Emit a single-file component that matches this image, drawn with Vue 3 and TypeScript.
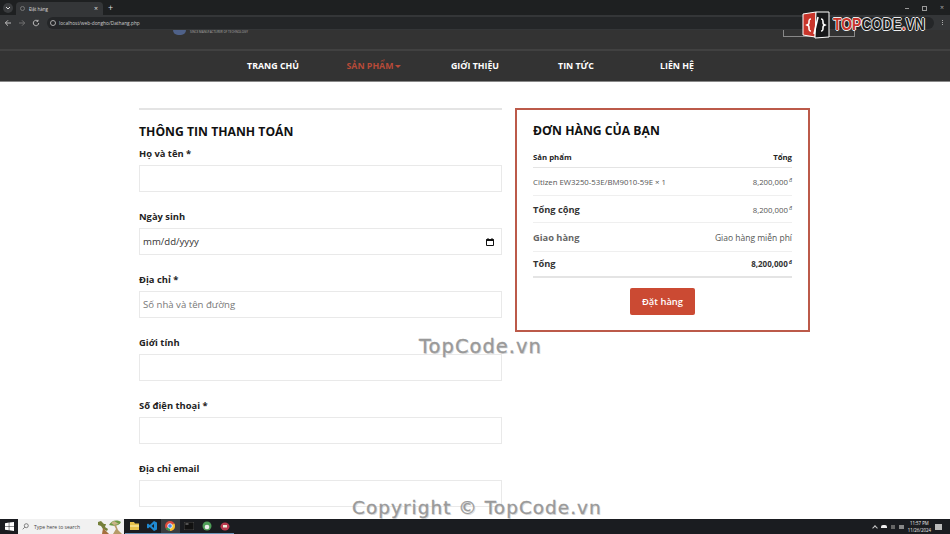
<script setup lang="ts">
const navItems = [
  { label: 'TRANG CHỦ' },
  { label: 'SẢN PHẨM', active: true },
  { label: 'GIỚI THIỆU' },
  { label: 'TIN TỨC' },
  { label: 'LIÊN HỆ' },
];

const fields = [
  { label: 'Họ và tên *', type: 'text', placeholder: '' },
  { label: 'Ngày sinh', type: 'date', placeholder: '' },
  { label: 'Địa chỉ *', type: 'text', placeholder: 'Số nhà và tên đường' },
  { label: 'Giới tính', type: 'text', placeholder: '' },
  { label: 'Số điện thoại *', type: 'text', placeholder: '' },
  { label: 'Địa chỉ email', type: 'text', placeholder: '' },
];
</script>

<template>
  <div class="screen">
    <!-- Browser tabs -->
    <div class="tabstrip">
      <span class="tab-menu">
        <svg width="6" height="6" viewBox="0 0 6 6"><path d="M1 2l2 2 2-2" fill="none" stroke="#ddd" stroke-width="1" /></svg>
      </span>
      <div class="tab">
        <span class="tab-icon"></span>
        <span class="tab-title">Đặt hàng</span>
        <span class="tab-close">×</span>
      </div>
      <span class="tab-new">+</span>
      <div class="window-btns">
        <span class="win-min"></span>
        <span class="win-restore"></span>
        <span class="win-close">×</span>
      </div>
    </div>

    <!-- Address bar -->
    <div class="toolbar">
      <svg width="8" height="8" viewBox="0 0 8 8"><path d="M7 4H1.500M4 1.300L1.300 4 4 6.700" fill="none" stroke="#ccc" stroke-width="0.9" /></svg>
      <svg width="8" height="8" viewBox="0 0 8 8"><path d="M1 4h5.500M4 1.300L6.700 4 4 6.700" fill="none" stroke="#777" stroke-width="0.9" /></svg>
      <svg width="8" height="8" viewBox="0 0 8 8"><path d="M6.700 4A2.700 2.700 0 1 1 5.800 2M6 .8V2.300H4.500" fill="none" stroke="#ccc" stroke-width="0.9" /></svg>
      <div class="address">
        <span class="site-icon"></span>
        <span>localhost/web-dongho/Dathang.php</span>
      </div>
      <span class="kebab"></span>
    </div>

    <div class="page">
      <header class="site-top">
        <div class="site-logo">
          <span class="site-badge"></span>
          <span class="site-tagline">SINCE MANUFACTURER OF TECHNOLOGY</span>
        </div>
        <div class="site-search"></div>
      </header>

      <nav class="nav">
        <a
          v-for="item in navItems"
          :key="item.label"
          class="nav-link"
          :class="{ active: item.active }"
        >
          {{ item.label }}<i v-if="item.active" class="caret"></i>
        </a>
      </nav>

      <main class="content">
        <section class="billing">
          <h2>THÔNG TIN THANH TOÁN</h2>
          <div v-for="field in fields" :key="field.label" class="field">
            <label>{{ field.label }}</label>
            <div class="input">
              <template v-if="field.type === 'date'">
                <span class="date-text">mm/dd/yyyy</span>
                <svg width="10" height="10" viewBox="0 0 10 10">
                  <path d="M1.500 2.500h7v6h-7zM3 1v1.500M7 1v1.500" fill="none" stroke="#111" stroke-width="1" />
                  <rect x="1.500" y="2" width="7" height="2" fill="#111" />
                </svg>
              </template>
              <span v-else class="placeholder">{{ field.placeholder }}</span>
            </div>
          </div>
        </section>

        <aside class="order">
          <h2>ĐƠN HÀNG CỦA BẠN</h2>
          <div class="row row-head">
            <span>Sản phẩm</span>
            <span>Tổng</span>
          </div>
          <div class="row row-item">
            <span>Citizen EW3250-53E/BM9010-59E × 1</span>
            <span>8,200,000<sup>đ</sup></span>
          </div>
          <div class="row row-sub">
            <strong>Tổng cộng</strong>
            <span>8,200,000<sup>đ</sup></span>
          </div>
          <div class="row row-ship">
            <strong>Giao hàng</strong>
            <span>Giao hàng miễn phí</span>
          </div>
          <div class="row row-total">
            <strong>Tổng</strong>
            <b>8,200,000<sup>đ</sup></b>
          </div>
          <button class="order-btn">Đặt hàng</button>
        </aside>
      </main>
    </div>

    <!-- Windows taskbar -->
    <footer class="taskbar">
      <span class="start">
        <svg width="9" height="9" viewBox="0 0 9 9"><path d="M0 1.200l3.800-.6v3.500H0zM4.300.5L9 0v4.100H4.300zM0 4.600h3.800v3.600L0 7.700zM4.300 4.600H9V9l-4.700-.7z" fill="#fff" /></svg>
      </span>
      <div class="search">
        <svg width="7" height="7" viewBox="0 0 7 7"><circle cx="4.300" cy="2.700" r="2" fill="none" stroke="#555" stroke-width="0.7" /><path d="M2.800 4.200L.7 6.300" stroke="#555" stroke-width="0.7" /></svg>
        <span>Type here to search</span>
        <svg class="search-art" width="26" height="15" viewBox="0 0 26 15">
          <path d="M1 3l3-1 3 3 2 0-1 3 3 2-1 2-4-2-2-3-3-1z" fill="#75803a" />
          <path d="M12 6c2-4 7-6 12-3-1 3-6 5-12 3z" fill="#6d9a45" />
          <path d="M14 4l3-2 5 3-5 1z" fill="#c9b48a" />
          <path d="M17 6l2 4-3 5h9l-4-4-2-5z" fill="#b59a67" />
          <path d="M6 9l3 3 3 3H5z" fill="#a4703d" />
        </svg>
      </div>
      <div class="task-icons">
        <span class="task">
          <svg width="9" height="8" viewBox="0 0 9 8"><path d="M0 0h4l1 1.500h4V8H0z" fill="#e8c14a" /><rect y="3" width="9" height="2" fill="#f5dd85" /></svg>
        </span>
        <span class="task">
          <svg width="10" height="10" viewBox="0 0 10 10"><path d="M7 0l3 1.500v7L7 10 2.800 6 1 7.400 0 6.800V3.200L1 2.600 2.800 4zM7 3L4.600 5 7 7z" fill="#1f8ad2" /></svg>
        </span>
        <span class="task task-on">
          <svg width="10" height="10" viewBox="0 0 10 10"><circle cx="5" cy="5" r="5" fill="#dd4b3c" /><path d="M5 5L.8 7.500A5 5 0 0 0 5 10z" fill="#2f9e4f" /><path d="M5 5l4.300-2.500A5 5 0 0 1 5 10z" fill="#f2c230" /><circle cx="5" cy="5" r="2.300" fill="#4a86e8" stroke="#fff" stroke-width="0.8" /></svg>
        </span>
        <span class="task">
          <svg width="10" height="8" viewBox="0 0 10 8"><rect width="10" height="8" fill="#111" stroke="#777" stroke-width="0.5" /><path d="M1.500 2h3" stroke="#ccc" stroke-width="0.7" /></svg>
        </span>
        <span class="task">
          <svg width="10" height="10" viewBox="0 0 10 10"><circle cx="5" cy="5" r="4.500" fill="#4f9e58" /><circle cx="5" cy="6" r="2.300" fill="#eee" /></svg>
        </span>
        <span class="task">
          <svg width="10" height="9" viewBox="0 0 10 9"><ellipse cx="5" cy="4.500" rx="4.500" ry="4" fill="#b93a4e" /><rect x="3" y="3" width="4" height="2.500" fill="#eed" /></svg>
        </span>
      </div>
      <div class="tray">
        <span class="tray-up"></span>
        <span class="tray-cloud"></span>
        <span class="tray-net"></span>
        <span class="tray-vol"></span>
        <div class="clock">
          <span>11:57 PM</span>
          <span>11/26/2024</span>
        </div>
        <span class="notify"></span>
      </div>
    </footer>

    <!-- Overlays burned into the screenshot -->
    <div class="brand">
      <svg width="29" height="28" viewBox="0 0 29 28">
        <path d="M1 3l13-2-1 25-12-2z" fill="#c8352b" stroke="#fff" stroke-width="1" />
        <path d="M14 1h13v25l-14 1z" fill="#17181a" stroke="#fff" stroke-width="1" />
        <path d="M9 8c-2 0-2 1-2 3s0 2-2 3c2 1 2 1 2 3s0 3 2 3" fill="none" stroke="#fff" stroke-width="1.600" />
        <path d="M19 8c2 0 2 1 2 3s0 2 2 3c-2 1-2 1-2 3s0 3-2 3" fill="none" stroke="#fff" stroke-width="1.600" />
        <path d="M16 6l-4 17" stroke="#fff" stroke-width="1.600" />
      </svg>
      <span class="brand-name"><em>TOP</em>CODE<em>.</em>VN</span>
    </div>
    <div class="mark mark-mid">TopCode.vn</div>
    <div class="mark mark-low">Copyright © TopCode.vn</div>
  </div>
</template>

<style>
html,
body {
  margin: 0;
  overflow: hidden;
  background: #fff;
}
</style>

<style scoped>
.screen {
  position: relative;
  display: flex;
  flex-direction: column;
  width: 950px;
  height: 534px;
  overflow: hidden;
  font-family: 'Open Sans', 'Noto Sans', sans-serif;
  color: #111;
}

/* browser */
.tabstrip {
  display: flex;
  align-items: flex-end;
  height: 15px;
  padding-left: 2px;
  background: #1e2021;
  color: #ddd;
}
.tab-menu {
  display: flex;
  align-items: center;
  justify-content: center;
  width: 10px;
  height: 10px;
  margin: 0 3px 2px 1px;
  border-radius: 50%;
  background: #3a3c3e;
}
.tab {
  display: flex;
  align-items: center;
  width: 87px;
  height: 13px;
  padding: 0 5px 0 4px;
  box-sizing: border-box;
  border-radius: 4px 4px 0 0;
  background: #343638;
  font-size: 4.500px;
}
.tab-icon {
  width: 5px;
  height: 5px;
  margin-right: 4px;
  border-radius: 50%;
  border: 1px solid #777;
  box-sizing: border-box;
}
.tab-title {
  flex: 1;
}
.tab-close {
  font-size: 7px;
  line-height: 1;
}
.tab-new {
  margin: 0 0 2px 5px;
  font-size: 9px;
  line-height: 10px;
}
.window-btns {
  display: flex;
  align-items: center;
  gap: 13px;
  margin: 0 6px 4px auto;
  height: 6px;
}
.win-min {
  width: 4px;
  height: 1px;
  background: #999;
}
.win-restore {
  width: 3px;
  height: 3px;
  border: 1px solid #999;
}
.win-close {
  font-size: 7px;
  line-height: 6px;
  color: #aaa;
}
.toolbar {
  display: flex;
  align-items: center;
  gap: 6px;
  height: 15px;
  padding: 0 7px 0 4px;
  background: #343638;
}
.address {
  display: flex;
  flex: 1;
  align-items: center;
  gap: 3px;
  height: 12px;
  margin-left: 1px;
  padding-left: 3px;
  border-radius: 6px;
  background: #242628;
  color: #ccc;
  font-size: 4.800px;
}
.site-icon {
  width: 6px;
  height: 6px;
  border: 1px solid #aaa;
  border-radius: 50%;
  box-sizing: border-box;
}
.kebab {
  width: 1px;
  height: 1px;
  margin-left: 2px;
  background: #aaa;
  box-shadow: 0 -2px #aaa, 0 2px #aaa;
}

/* site */
.page {
  flex: 1;
  min-height: 0;
  overflow: hidden;
}
.site-top {
  display: flex;
  justify-content: space-between;
  box-sizing: border-box;
  height: 21px;
  padding: 0 95px 0 173px;
  background: #333;
  border-bottom: 2px solid #414141;
}
.site-logo {
  display: flex;
  gap: 4px;
  height: 6px;
}
.site-badge {
  width: 13px;
  height: 5px;
  border-radius: 0 0 7px 7px;
  background: #4f6188;
}
.site-tagline {
  margin-top: -1px;
  font-size: 3px;
  line-height: 6px;
  color: #aaa;
  white-space: nowrap;
}
.site-search {
  width: 72px;
  height: 7px;
  box-sizing: border-box;
  border: 1px solid #888;
  border-top: 0;
}
.nav {
  display: grid;
  grid-template-columns: repeat(5, 101px);
  justify-content: center;
  align-items: center;
  height: 30px;
  background: #333;
  box-shadow: 0 1px 0 #888;
}
.nav-link {
  font-size: 8.800px;
  font-weight: 700;
  text-align: center;
  color: #fff;
  white-space: nowrap;
}
.nav-link.active {
  color: #b84a38;
}
.caret {
  display: inline-block;
  margin-left: 2px;
  border: 3px solid transparent;
  border-top-color: #b84a38;
  border-bottom: 0;
  vertical-align: 1.500px;
}
.content {
  display: flex;
  gap: 13px;
  align-items: flex-start;
  padding: 27px 140px 0 139px;
}
.billing {
  flex: none;
  width: 363px;
  border-top: 2px solid #e4e4e4;
}
h2 {
  margin: 0;
  font-size: 12.200px;
  line-height: 17px;
  font-weight: 700;
  color: #111;
}
.billing h2 {
  margin: 13px 0 5px;
}
.field {
  margin-bottom: 16px;
}
.field label {
  display: block;
  height: 20px;
  font-size: 9.400px;
  line-height: 18px;
  font-weight: 700;
  color: #222;
}
.input {
  display: flex;
  align-items: center;
  justify-content: space-between;
  box-sizing: border-box;
  height: 27px;
  padding: 0 6px 0 3px;
  border: 1px solid #e9e9e9;
  font-size: 9.600px;
}
.date-text {
  color: #333;
}
.placeholder {
  color: #777;
}
.order {
  flex: none;
  box-sizing: border-box;
  width: 295px;
  height: 224px;
  padding: 12px 16px 0;
  border: 2px solid #bc5a4a;
}
.row {
  display: flex;
  align-items: center;
  justify-content: space-between;
  border-bottom: 1px solid #efefef;
  font-size: 7.800px;
  color: #555;
}
.row strong {
  font-size: 9.300px;
  font-weight: 700;
}
sup {
  margin-left: 1px;
  font-size: 5px;
  line-height: 0;
  vertical-align: 3px;
}
.row-head {
  height: 21px;
  padding-top: 7px;
  font-weight: 700;
  color: #222;
  border-bottom: 1px solid #e4e4e4;
}
.row-item {
  height: 27px;
}
.row-sub {
  height: 25px;
  padding-top: 1px;
}
.row-sub strong {
  color: #333;
}
.row-ship {
  height: 27px;
  padding-top: 1px;
}
.row-ship strong {
  color: #666;
}
.row-ship span {
  font-size: 8.500px;
}
.row-total {
  height: 23px;
  padding-bottom: 1px;
  border-bottom: 2px solid #e4e4e4;
}
.row-total strong,
.row-total b {
  color: #333;
}
.row-total b {
  font-size: 8px;
}
.order-btn {
  display: block;
  width: 65px;
  height: 27px;
  margin: 10px auto 0;
  border: 0;
  border-radius: 2px;
  background: #cb4a33;
  color: #fff;
  font: 600 9.400px 'Open Sans', sans-serif;
}

/* taskbar */
.taskbar {
  display: flex;
  align-items: center;
  height: 15px;
  background: #1a1c20;
  color: #ddd;
}
.start {
  display: flex;
  align-items: center;
  justify-content: center;
  width: 18px;
}
.search {
  position: relative;
  display: flex;
  align-items: center;
  gap: 5px;
  box-sizing: border-box;
  width: 106px;
  height: 15px;
  padding-left: 4px;
  background: #f1f1f1;
  color: #444;
  font-size: 5px;
}
.search-art {
  position: absolute;
  right: 1px;
  top: 0;
}
.task-icons {
  display: flex;
  margin-left: 1px;
}
.task {
  display: flex;
  align-items: center;
  justify-content: center;
  box-sizing: border-box;
  width: 18.200px;
  height: 15px;
  border-bottom: 1px solid #6a94b8;
}
.task-on {
  background: #3b3d41;
}
.tray {
  display: flex;
  align-items: center;
  gap: 4px;
  margin-left: auto;
  padding-right: 8px;
}
.tray-up {
  width: 3px;
  height: 3px;
  margin-top: 2px;
  border-top: 1px solid #ccc;
  border-left: 1px solid #ccc;
  transform: rotate(45deg);
}
.tray-cloud {
  width: 6px;
  height: 3px;
  border-radius: 2px 2px 0 0;
  background: #eee;
}
.tray-net {
  width: 4px;
  height: 4px;
  background: #666;
}
.tray-vol {
  width: 5px;
  height: 4px;
  background: #888;
}
.clock {
  display: flex;
  flex-direction: column;
  align-items: center;
  font-size: 4.400px;
  line-height: 6.500px;
  color: #eee;
}
.notify {
  width: 7px;
  height: 6px;
  background: #bbb;
}

/* overlays */
.brand {
  position: absolute;
  top: 11px;
  left: 802px;
  display: flex;
  align-items: center;
  gap: 2px;
}
.brand-name {
  display: inline-block;
  font-family: 'Liberation Sans', sans-serif;
  font-size: 17px;
  font-weight: 700;
  color: #1d1d1d;
  white-space: nowrap;
  transform: scaleX(0.82);
  transform-origin: left center;
  text-shadow: 1px 0 0 #eee, -1px 0 0 #eee, 0 1px 0 #eee, 0 -1px 0 #eee;
}
.brand-name em {
  font-style: normal;
  color: #c8352b;
}
.mark {
  position: absolute;
  font-family: 'DejaVu Sans', 'Noto Sans', sans-serif;
  color: #999;
  -webkit-text-stroke: 0.3px #999;
  text-shadow: 1px 1px 0 #dcdcdc;
  white-space: nowrap;
}
.mark-mid {
  left: 419px;
  top: 335px;
  font-size: 19.500px;
  line-height: 24px;
  letter-spacing: 1px;
}
.mark-low {
  left: 352px;
  top: 496px;
  font-size: 18.500px;
  line-height: 24px;
  letter-spacing: 1px;
}
</style>
